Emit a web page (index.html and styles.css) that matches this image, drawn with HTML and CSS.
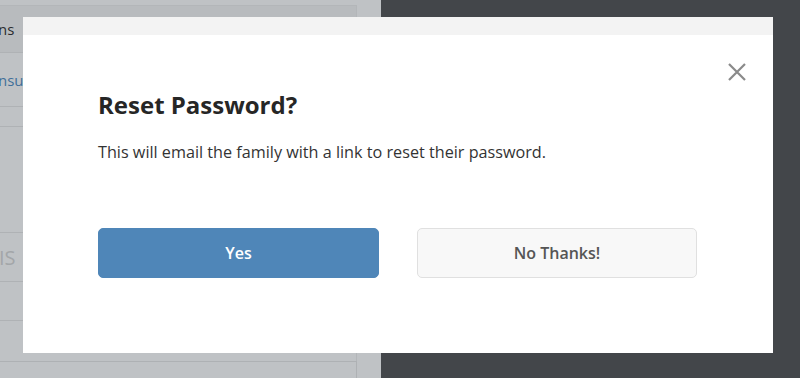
FILE: index.html
```html
<!DOCTYPE html>
<html>
<head>
<meta charset="utf-8">
<link rel="stylesheet" href="styles.css">
</head>
<body>
<div class="page">
  <div class="left">
    <div class="card">
      <div class="row head"><span class="txt-end">ns</span></div>
      <div class="row r2"><span class="txt-end link">nsu</span></div>
      <div class="row r3"></div>
      <div class="row r4"></div>
      <div class="row r5"><span class="txt-end big">IS</span></div>
      <div class="row r6"></div>
      <div class="row r7"></div>
    </div>
    <div class="box"></div>
  </div>
  <div class="right"></div>
</div>

<div class="modal">
  <div class="modal-top"></div>
  <div class="modal-body">
    <button class="close" aria-label="Close">
      <svg width="20" height="20" viewBox="0 0 20 20"><path d="M2 2 L18 18 M18 2 L2 18" stroke="#8a8a8a" stroke-width="2.2" fill="none"/></svg>
    </button>
    <h2 class="title">Reset Password?</h2>
    <p class="text">This will email the family with a link to reset their password.</p>
    <div class="actions">
      <button class="btn yes">Yes</button>
      <button class="btn no">No Thanks!</button>
    </div>
  </div>
</div>
</body>
</html>
```

FILE: styles.css
```css
* { box-sizing: border-box; }
html, body { margin: 0; padding: 0; }
body {
  width: 800px;
  height: 378px;
  overflow: hidden;
  font-family: "Open Sans", "Liberation Sans", sans-serif;
  background: #43464a;
}
.page {
  display: flex;
  height: 378px;
}
.left {
  width: 381px;
  background: #bfc2c5;
  padding-top: 5px;
  display: flex;
  flex-direction: column;
}
.right { flex: 1; background: #43464a; }
.card {
  width: 357px;
  border-top: 1px solid #b3b6b9;
  border-right: 1px solid #b3b6b9;
}
.row {
  border-bottom: 1px solid #afb2b5;
  display: flex;
  align-items: center;
  overflow: hidden;
}
.head { height: 47px; background: #b8bbbe; }
.r2 { height: 54px; }
.r3 { height: 20px; }
.r4 { height: 106px; }
.r5 { height: 49px; }
.r6 { height: 39px; }
.r7 { height: 40px; border-bottom: none; }
.txt-end {
  font-size: 15px;
  color: #2a2c2e;
  margin-left: -2px;
}
.link { color: #3f6f99; }
.big { font-size: 20px; color: #a3a6a9; margin-left: -1px; }
.box {
  width: 357px;
  flex: 1;
  border-top: 1px solid #aeb1b4;
  border-right: 1px solid #aeb1b4;
}

.modal {
  position: absolute;
  left: 23px;
  top: 17px;
  width: 750px;
  height: 336px;
  background: #fff;
  display: flex;
  flex-direction: column;
}
.modal-top {
  height: 18px;
  background: #f3f3f3;
}
.modal-body {
  position: relative;
  flex: 1;
  padding: 54px 76px 0 75px;
}
.close {
  position: absolute;
  right: 26px;
  top: 27px;
  width: 20px;
  height: 20px;
  padding: 0;
  border: none;
  background: none;
}
.close svg { display: block; }
.title {
  margin: 0;
  font-size: 24px;
  font-weight: 700;
  color: #262626;
  line-height: 32px;
}
.text {
  margin: 19px 0 0;
  font-size: 16.2px;
  line-height: 24px;
  color: #333;
}
.actions {
  display: flex;
  gap: 38px;
  margin-top: 64px;
}
.btn {
  width: 281px;
  height: 50px;
  border-radius: 5px;
  font-family: "Open Sans", "Liberation Sans", sans-serif;
  font-size: 16px;
  font-weight: 600;
  cursor: pointer;
}
.yes {
  background: #4f86b8;
  border: 1px solid #4f86b8;
  color: #fff;
}
.no {
  width: 280px;
  background: #f8f8f8;
  border: 1px solid #e0e0e0;
  color: #555;
}
```
